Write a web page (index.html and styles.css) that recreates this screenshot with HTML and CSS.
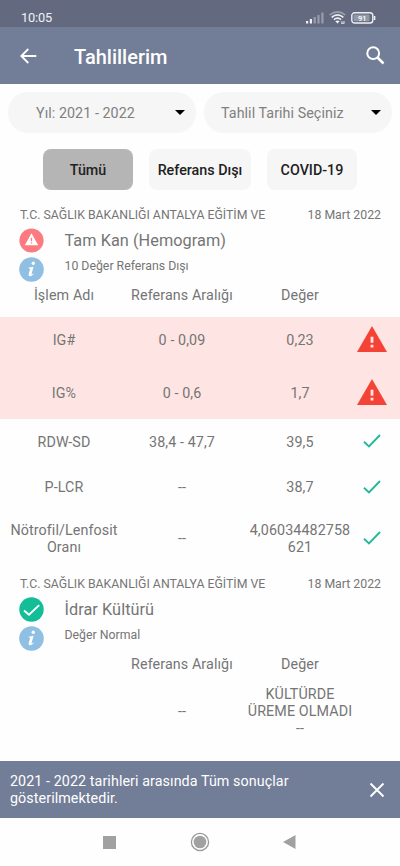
FILE: index.html
```html
<!DOCTYPE html>
<html lang="tr">
<head>
<meta charset="utf-8">
<meta name="viewport" content="width=device-width, initial-scale=1">
<title>Tahlillerim</title>
<link rel="stylesheet" href="styles.css">
</head>
<body>
<svg width="0" height="0" class="defs">
  <symbol id="alert" viewBox="0 0 30 26"><path fill="#f44336" d="M15 0 30 26H0z"/><path fill="#fee5e3" d="M13.6 10.7h2.8v6h-2.8zM13.6 18.8h2.8v2.7h-2.8z"/></symbol>
  <symbol id="tick" viewBox="0 0 18 14"><path d="M1 7.8 6 12.4 17 1" fill="none" stroke="#22b99b" stroke-width="1.9"/></symbol>
  <symbol id="info" viewBox="0 0 24 24"><circle cx="12" cy="12" r="11.800" fill="#8fbfe2"/><circle cx="13.700" cy="6" r="1.600" fill="#fff"/><path d="M9.300 10.200 14 9.300l-1.900 6.800q-.2.900.5.500l1.100-.8.400.6q-2 2.300-3.800 2.100-1.500-.3-1-2.100l1.500-5.200-1.600-.2z" fill="#fff"/></symbol>
</svg>
<div class="screen">
  <div class="status">
    <span class="clock">10:05</span>
    <svg class="signal" width="18" height="12" viewBox="0 0 18 12"><path fill="#eef0f5" d="M0 9h2.2v2.5H0zM3.8 7H6v4.5H3.8z"/><path fill="#979dac" d="M7.6 5h2.2v6.500H7.600zM11.400 3h2.200v8.500h-2.200zM15.300.5h2.200v11h-2.200z"/></svg>
    <svg class="wifi" width="17" height="13" viewBox="0 0 17 13"><g fill="none" stroke-width="1.6"><path stroke="#9ca1b0" d="M.7 4Q8.500-2.300 16.300 4"/><path stroke="#eef0f5" d="M2.600 6.300q5.900-4.800 11.800 0M4.900 8.700q3.600-3 7.200 0"/></g><path fill="#eef0f5" d="M6.300 10.300q2.200-1.500 4.400 0l-2.200 2.300z"/><path d="M12 11h4M12 12.300h3.500" stroke="#dfe2ea"/></svg>
    <svg class="battery" width="25" height="12" viewBox="0 0 25 12"><rect x=".8" y=".8" width="21" height="10.200" rx="2.800" fill="none" stroke="#eef0f5" stroke-width="1.400"/><rect x="2.500" y="2.500" width="16" height="6.800" rx="1" fill="#9298a8"/><path d="M23.600 4v4" stroke="#eef0f5" stroke-width="1.500"/><text x="11.200" y="8.800" class="charge">91</text></svg>
  </div>
  <header class="appbar">
    <svg width="17" height="16" viewBox="0 0 17 16"><path d="M16.300 8H1.500M8.300 1 1.300 8l7 7" fill="none" stroke="#fff" stroke-width="1.800"/></svg>
    <h1>Tahlillerim</h1>
    <svg width="19" height="19" viewBox="0 0 19 19"><circle cx="7.200" cy="7.200" r="5.900" fill="none" stroke="#fff" stroke-width="2"/><path d="m11.500 11.500 6 6" stroke="#fff" stroke-width="2.500"/></svg>
  </header>
  <div class="selects">
    <div class="select year"><span>Yıl: 2021 - 2022</span><i class="caret"></i></div>
    <div class="select date"><span>Tahlil Tarihi Seçiniz</span><i class="caret"></i></div>
  </div>
  <div class="filters">
    <button class="chip active">Tümü</button>
    <button class="chip ref">Referans Dışı</button>
    <button class="chip">COVID-19</button>
  </div>
  <main>
    <section class="result">
      <div class="meta"><span>T.C. SAĞLIK BAKANLIĞI ANTALYA EĞİTİM VE</span><span>18 Mart 2022</span></div>
      <div class="summary">
        <div class="badges">
          <svg width="25" height="25" viewBox="0 0 25 25"><circle cx="12.500" cy="12.500" r="12.100" fill="#fb7b80"/><path fill="#fff" d="m12.500 5.300 6.700 11.900H5.800z"/><path stroke="#fb7b80" stroke-width="1.300" d="M12.500 9.700v3.500M12.500 14.200v1.300"/></svg>
          <svg width="25" height="25"><use href="#info"/></svg>
        </div>
        <div class="names"><h2>Tam Kan (Hemogram)</h2><p>10 Değer Referans Dışı</p></div>
      </div>
      <div class="row head"><span>İşlem Adı</span><span>Referans Aralığı</span><span>Değer</span></div>
      <div class="flagged">
        <div class="row"><span>IG#</span><span>0 - 0,09</span><span>0,23</span><svg width="30" height="26"><use href="#alert"/></svg></div>
        <div class="row"><span>IG%</span><span>0 - 0,6</span><span>1,7</span><svg width="30" height="26"><use href="#alert"/></svg></div>
      </div>
      <div class="row normal"><span>RDW-SD</span><span>38,4 - 47,7</span><span>39,5</span><svg width="18" height="14"><use href="#tick"/></svg></div>
      <div class="row normal"><span>P-LCR</span><span>--</span><span>38,7</span><svg width="18" height="14"><use href="#tick"/></svg></div>
      <div class="row tall"><span>Nötrofil/Lenfosit<br>Oranı</span><span>--</span><span>4,06034482758<br>621</span><svg width="18" height="14"><use href="#tick"/></svg></div>
    </section>
    <section class="result">
      <div class="meta"><span>T.C. SAĞLIK BAKANLIĞI ANTALYA EĞİTİM VE</span><span>18 Mart 2022</span></div>
      <div class="summary">
        <div class="badges">
          <svg width="25" height="25" viewBox="0 0 25 25"><circle cx="12.500" cy="12.500" r="12.200" fill="#12bd98"/><path d="m5 13.500 5 4.300 10.200-9.700" fill="none" stroke="#fff" stroke-width="1.900"/></svg>
          <svg width="25" height="25"><use href="#info"/></svg>
        </div>
        <div class="names"><h2>İdrar Kültürü</h2><p>Değer Normal</p></div>
      </div>
      <div class="row head"><span></span><span>Referans Aralığı</span><span>Değer</span></div>
      <div class="row culture"><span></span><span>--</span><span>KÜLTÜRDE<br>ÜREME OLMADI<br>--</span></div>
    </section>
  </main>
  <div class="snackbar">
    <p>2021 - 2022 tarihleri arasında Tüm sonuçlar<br>gösterilmektedir.</p>
    <svg width="16" height="16" viewBox="0 0 16 16"><path d="m1.500 1.500 13 13M14.500 1.500l-13 13" stroke="#fff" stroke-width="1.900"/></svg>
  </div>
  <nav class="navbar">
    <svg width="13" height="13"><rect width="13" height="13" fill="#a1a1a1"/></svg>
    <svg width="20" height="20" viewBox="0 0 20 20"><circle cx="10" cy="10" r="8.600" fill="none" stroke="#999" stroke-width="1.300"/><circle cx="10" cy="10" r="6.300" fill="#a1a1a1"/></svg>
    <svg width="13" height="14" viewBox="0 0 13 14"><path d="M12.500 0v14L0 7z" fill="#a1a1a1"/></svg>
  </nav>
</div>
</body>
</html>
```
FILE: styles.css
```css
* { box-sizing: border-box; margin: 0; padding: 0; }
body { background: #fefefe; font-family: Roboto, sans-serif; color: #757575; }
svg { display: block; flex: none; }
.defs { position: absolute; }
.screen { width: 400px; height: 866px; display: flex; flex-direction: column; overflow: hidden; }

.status { height: 27px; flex: none; background: #636a7f; display: flex; align-items: center; padding: 8px 24px 0 21px; }
.clock { flex: 1; color: #f0f2f6; font-size: 12.8px; letter-spacing: -0.15px; line-height: 16px; }
.signal { margin-right: 5px; }
.wifi { margin-right: 5px; }
.charge { font-size: 7.5px; font-weight: 500; fill: #fff; text-anchor: middle; }

.appbar { height: 57px; flex: none; background: #727d97; display: flex; align-items: center; padding: 0 15px 0 20px; }
.appbar h1 { flex: 1; margin-left: 37px; padding-top: 2px; color: #fff; font-size: 20px; font-weight: 500; line-height: 24px; }

.selects { display: flex; gap: 8px; padding: 8px 8px 0; flex: none; }
.select { height: 41px; border-radius: 20px; background: #f6f6f6; display: flex; align-items: center; justify-content: space-between; font-size: 14.3px; letter-spacing: .06px; color: #808080; }
.year { width: 188px; padding: 0 11px 0 28px; }
.date { width: 188px; padding: 0 11px 0 17px; }
.caret { border: 5px solid transparent; border-top-color: #000; border-bottom: 0; }

.filters { display: flex; gap: 16px; padding: 16px 43px 0; flex: none; }
.chip { width: 90px; height: 41px; border: 0; border-radius: 8px; background: #f6f6f6; color: #212121; font: 500 14.3px Roboto, sans-serif; white-space: nowrap; }
.chip.active { background: #b5b5b5; }
.chip.ref { width: 102px; }

main { flex: 1; min-height: 0; padding-top: 17px; }
.meta { display: flex; justify-content: space-between; padding: 0 19px 0 20px; height: 16px; font-size: 12.3px; line-height: 16px; }
.summary { display: flex; padding-left: 19px; gap: 20.5px; height: 58px; padding-top: 5px; }
.badges { display: flex; flex-direction: column; gap: 4px; }
.names h2 { font-size: 16.3px; font-weight: 400; line-height: 20px; letter-spacing: .05px; padding-top: 3px; }
.names p { font-size: 12.3px; line-height: 16px; margin-top: 7px; }

.row { display: grid; grid-template-columns: 118px 118px 118px 26px; padding-left: 5px; align-items: center; justify-items: center; text-align: center; font-size: 14.3px; line-height: 17px; letter-spacing: .1px; }
.row svg { justify-self: center; }
.head { height: 36px; padding-bottom: 8px; }
.flagged { background: #fee5e3; height: 102px; padding-top: 7px; }
.flagged .row { height: 30px; margin-bottom: 23px; }
.flagged .row:last-child { margin-bottom: 0; }
.flagged span { padding-top: 2px; }
.normal { height: 45px; }
.flagged + .normal { height: 46px; }
.normal svg, .tall svg { margin-bottom: 2px; }
.tall { height: 57px; margin-bottom: 9px; }
.culture { height: 51px; }

.snackbar { height: 57px; flex: none; background: #727d97; display: flex; align-items: center; justify-content: space-between; padding: 0 15px 0 10px; color: #fff; }
.snackbar p { font-size: 14.3px; line-height: 17px; letter-spacing: .08px; padding-top: 1px; }
.navbar { height: 48px; flex: none; display: flex; align-items: center; justify-content: space-between; padding: 0 104px 0 103px; }
```
